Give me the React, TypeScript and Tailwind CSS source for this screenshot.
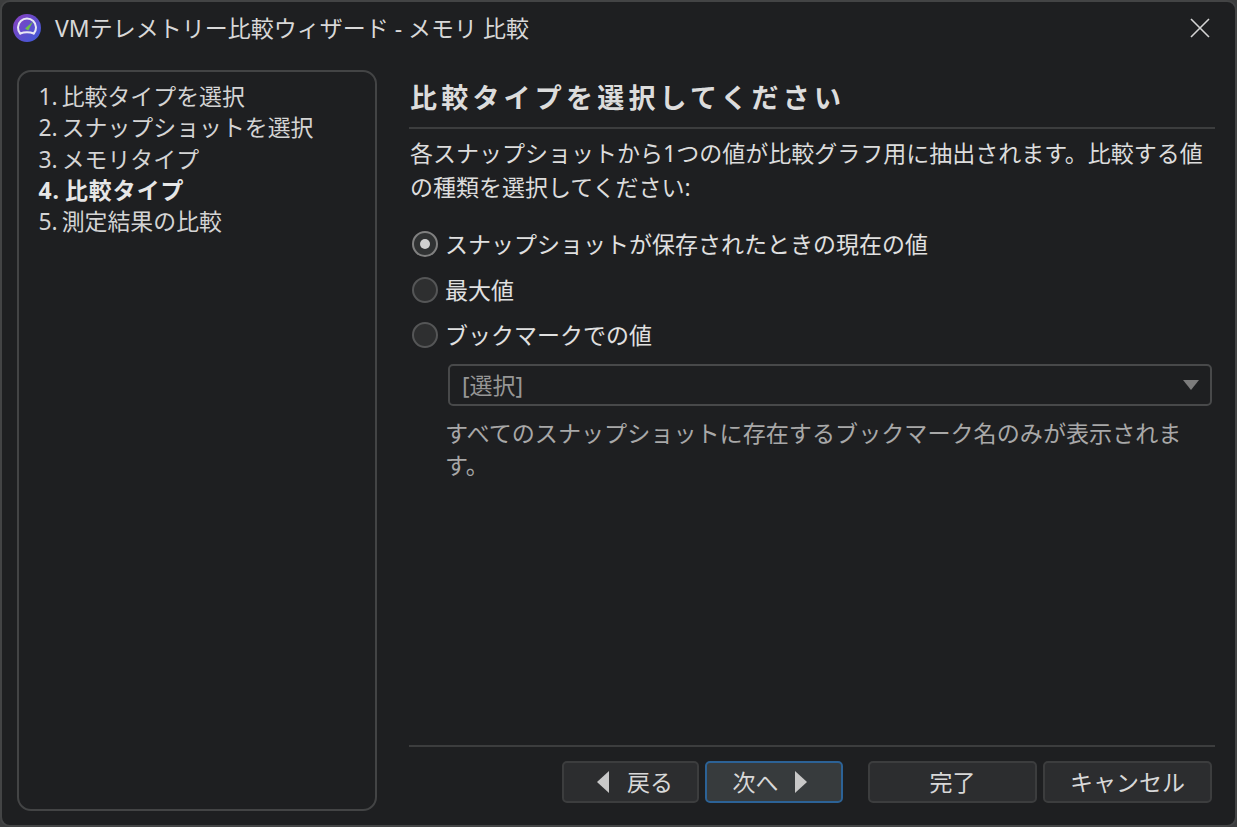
import React from 'react';

const font = { fontFamily: '"Noto Sans", "Noto Sans CJK JP", sans-serif' };

function AppIcon() {
  return (
    <svg width="28" height="28" viewBox="0 0 28 28">
      <defs>
        <linearGradient id="g" x1="0" y1="0" x2="1" y2="1">
          <stop offset="0" stopColor="#8a3fc0" />
          <stop offset="1" stopColor="#3a5bd8" />
        </linearGradient>
      </defs>
      <circle cx="14" cy="14" r="14" fill="url(#g)" />
      <path d="M7.2 19.5 A9 9 0 1 1 20.8 19.5" fill="none" stroke="#e8e8f4" strokeWidth="2" strokeLinecap="round" />
      <path d="M7.2 19.5 Q14 16.8 20.8 19.5" fill="none" stroke="#e8e8f4" strokeWidth="2" strokeLinecap="round" />
      <path d="M12 14.5 L20 7.5 L15.2 16.5 Z" fill="#6cc04a" />
    </svg>
  );
}

function Radio({ checked, label }: { checked?: boolean; label: string }) {
  return (
    <div className="flex items-center h-[26px] pl-[3px]">
      <div className={`w-[26px] h-[26px] rounded-full border-2 flex items-center justify-center ${checked ? 'border-[#808080] bg-[#303233]' : 'border-[#555657] bg-[#2e2f30]'}`}>
        {checked && <div className="w-[10px] h-[10px] rounded-full bg-[#d0d0d0]" />}
      </div>
      <span className="ml-[7px] text-[23px] leading-[26px] text-[#e0e0e0]">{label}</span>
    </div>
  );
}

function Btn({ children, className = '' }: { children: React.ReactNode; className?: string }) {
  return (
    <div className={`h-[42px] rounded-[5px] border-2 flex items-center justify-center text-[23px] text-[#d8d8d8] ${className}`}>
      {children}
    </div>
  );
}

export default function App() {
  const steps = ['1. 比較タイプを選択', '2. スナップショットを選択', '3. メモリタイプ', '4. 比較タイプ', '5. 測定結果の比較'];

  return (
    <div className="w-[1237px] h-[827px] bg-[#3c3d3e] overflow-hidden" style={font}>
      <div className="w-full h-full bg-[#1e1f21] rounded-[10px] border-2 border-[#434445] flex flex-col">
        {/* title bar */}
        <div className="h-[52px] shrink-0 flex items-center pl-[11px] pr-[25px]">
          <AppIcon />
          <span className="ml-[14px] text-[23px] text-[#d8d8d8] leading-none">VMテレメトリー比較ウィザード - メモリ 比較</span>
          <svg className="ml-auto" width="20" height="20" viewBox="0 0 20 20">
            <path d="M1 1 L19 19 M19 1 L1 19" stroke="#d4d4d4" strokeWidth="1.6" />
          </svg>
        </div>

        <div className="flex-1 flex pl-[15px] pr-[20px] pb-[14px] pt-[16px] min-h-0">
          {/* steps */}
          <div className="w-[360px] shrink-0 rounded-[14px] border-2 border-[#434445] pt-[9px] pl-[19.5px]">
            {steps.map((s, i) => (
              <div key={s} className={`h-[31.25px] leading-[31px] text-[22.9px] ${i === 3 ? 'font-bold tracking-[1px] [word-spacing:-2px] text-[#e6e6e6]' : '[word-spacing:-2px] text-[#d4d4d4]'}`}>{s}</div>
            ))}
          </div>

          {/* main */}
          <div className="flex-1 ml-[32px] flex flex-col min-w-0">
            <div className="h-[59px] border-b-2 border-[#3c3d3e] shrink-0 pl-[1px] pt-[10px] text-[27px] leading-[36px] font-semibold tracking-[4.2px] text-[#dcdcdc]">
              比較タイプを選択してください
            </div>
            <div className="mt-[7px] pl-[1px] pr-[6px] text-[23px] leading-[34px] text-[#dcdcdc]">
              各スナップショットから1つの値が比較グラフ用に抽出されます。比較する値の種類を選択してください:
            </div>
            <div className="mt-[27px] flex flex-col gap-[19.5px]">
              <Radio checked label="スナップショットが保存されたときの現在の値" />
              <Radio label="最大値" />
              <Radio label="ブックマークでの値" />
            </div>
            <div className="mt-[16px] ml-[39px] mr-[3px] h-[42px] rounded-[5px] border-2 border-[#48494a] flex items-center pl-[12px] pr-[11px] text-[23px] text-[#969696]">
              [選択]
              <svg className="ml-auto" width="16" height="10" viewBox="0 0 16 10">
                <path d="M0 0 H16 L8 10 Z" fill="#7c7c7c" />
              </svg>
            </div>
            <div className="mt-[11px] ml-[36px] mr-[20px] text-[23.1px] leading-[32px] text-[#a8a8a8]">
              すべてのスナップショットに存在するブックマーク名のみが表示されます。
            </div>

            <div className="mt-auto h-[66px] shrink-0 border-t-2 border-[#3c3d3e] pt-[14px] pl-[153px] pr-[3px] flex items-start">
              <Btn className="w-[137px] pl-[9px] bg-[#2c2d2f] border-[#3c3d3e] gap-[18px]">
                <svg width="12" height="22" viewBox="0 0 12 22"><path d="M12 0 V22 L0 11 Z" fill="#c8c8c8" /></svg>
                戻る
              </Btn>
              <Btn className="w-[138px] ml-[6px] pr-[9px] bg-[#373b3d] border-[#2c6296] gap-[16px]">
                次へ
                <svg width="12" height="22" viewBox="0 0 12 22"><path d="M0 0 V22 L12 11 Z" fill="#c8c8c8" /></svg>
              </Btn>
              <Btn className="w-[169px] ml-[25px] bg-[#2c2d2f] border-[#3c3d3e]">完了</Btn>
              <Btn className="w-[169px] ml-[6px] bg-[#2c2d2f] border-[#3c3d3e]">キャンセル</Btn>
            </div>
          </div>
        </div>
      </div>
    </div>
  );
}
